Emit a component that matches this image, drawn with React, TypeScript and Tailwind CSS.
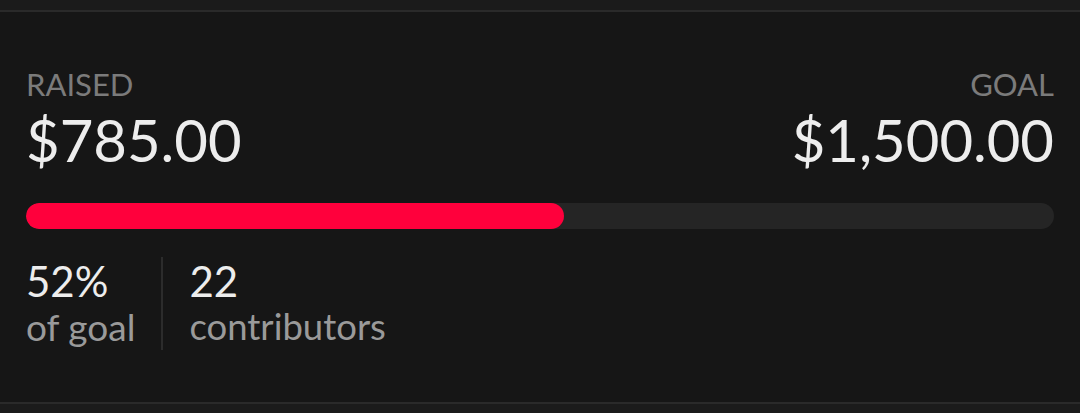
const raised = 785;
const goal = 1500;

export default function App() {
  const pct = (raised / goal) * 100;
  return (
    <div className="w-[1080px] h-[413px] bg-[#1b1b1b] pt-[10px] font-['Lato',sans-serif]">
      <div className="h-[394px] bg-[#161616] border-y-2 border-[#2a2a2a] px-[26px] pt-[54px]">
        <div className="flex justify-between items-end">
          <div>
            <p className="text-[31px] leading-[36px] text-[#7b7b7b]">RAISED</p>
            <p className="text-[58px] leading-[75px] text-[#ededed]">$785.00</p>
          </div>
          <div className="text-right">
            <p className="text-[31px] leading-[36px] text-[#7b7b7b]">GOAL</p>
            <p className="text-[58px] leading-[75px] text-[#ededed]">$1,500.00</p>
          </div>
        </div>
        <div className="mt-[26px] h-[26px] rounded-full bg-[#252525] overflow-hidden">
          <div className="h-full rounded-full bg-[#ff003c]" style={{ width: `${pct}%` }} />
        </div>
        <div className="mt-[28px] flex">
          <div className="pt-[2px] pr-[26px] border-r-2 border-[#2c2c2c]">
            <p className="text-[42px] leading-[44px] text-[#ededed]">52%</p>
            <p className="text-[37px] leading-[47px] text-[#9a9a9a]">of goal</p>
          </div>
          <div className="pt-[2px] pl-[26px]">
            <p className="text-[42px] leading-[44px] text-[#ededed]">22</p>
            <p className="text-[36.5px] leading-[47px] text-[#9a9a9a]">contributors</p>
          </div>
        </div>
      </div>
    </div>
  );
}
